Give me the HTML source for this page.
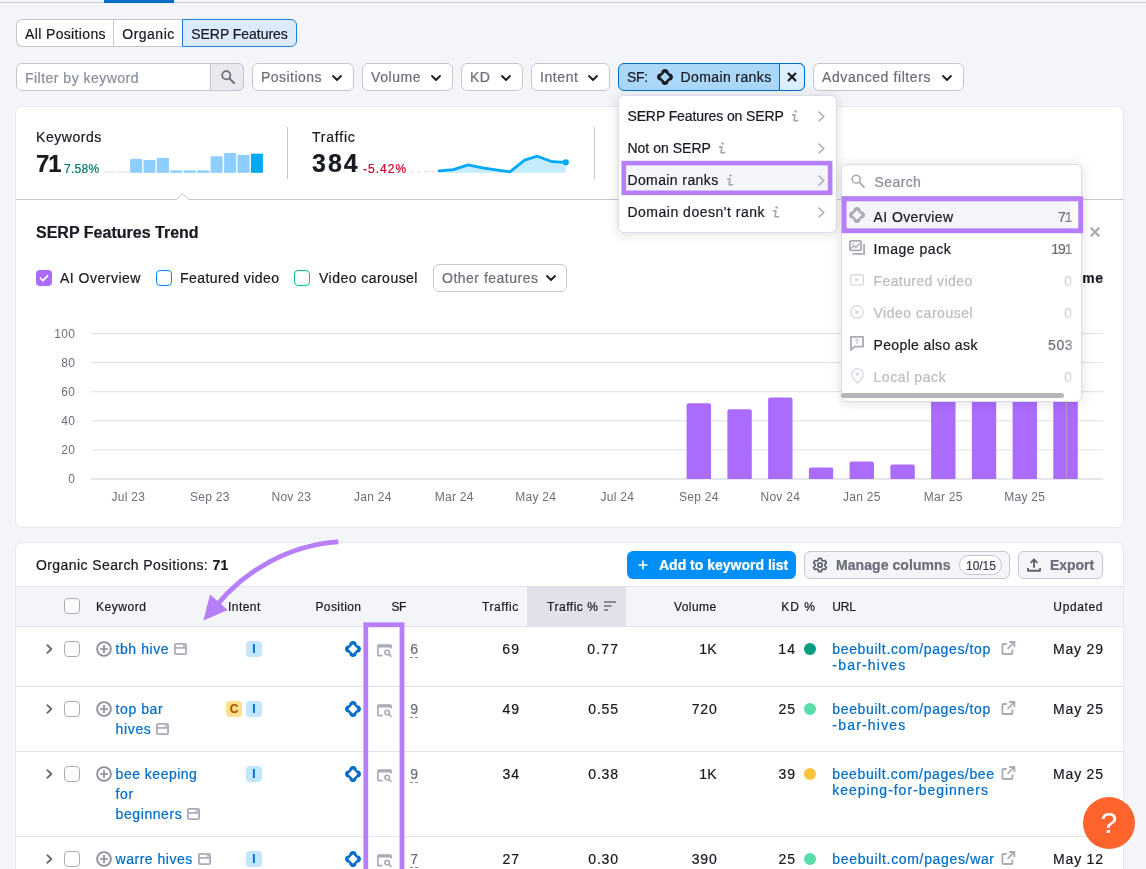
<!DOCTYPE html>
<html lang="en">
<head>
<meta charset="utf-8">
<title>Organic Research – SERP Features</title>
<style>
*{box-sizing:border-box;margin:0;padding:0}
html,body{width:1146px;height:869px;overflow:hidden}
body{background:#f4f5f9;font-family:"Liberation Sans",sans-serif;color:#191b23;font-size:14px;position:relative}
#root{-webkit-text-stroke:0.22px currentColor}
.abs{position:absolute}
.t{position:absolute;white-space:nowrap;line-height:1}
svg{display:block;position:absolute;overflow:visible}
/* top bar */
#topline{left:0;top:2px;width:1146px;height:1px;background:#c9ccd4}
#topblue{left:104px;top:0;width:70px;height:3px;background:#006dca}
/* tabs */
.tab{position:absolute;top:19px;height:28px;border:1px solid #c4c7cf;background:#fff;font-size:14px;line-height:28px;text-align:center;white-space:nowrap}
/* filters */
.fbtn{position:absolute;top:63px;height:28px;border:1px solid #c4c7cf;border-radius:6px;background:#fff;color:#6c6e79;font-size:14px;line-height:26px;white-space:nowrap}
.fbtn .lbl{position:absolute;left:8px;top:0}
.card{position:absolute;background:#fff;border-radius:6px;box-shadow:0 0 0 1px #e9eaf0}
.g{color:#6c6e79}

.bdg{width:16px;height:16px;border-radius:4px;font-size:12px;font-weight:bold;line-height:16px;text-align:center}
.th{font-size:12px;color:#191b23}
.kw{font-size:14px;color:#006dca;line-height:16px}
.url{font-size:14px;color:#006dca;line-height:16px}
.num{font-size:14px;line-height:16px}
.sfn{font-size:14px;line-height:16px;color:#6c6e79;border-bottom:1px dashed #8a8e9b;padding-bottom:0}

.menu{background:#fff;border-radius:6px;border:1px solid #dcdde6;box-shadow:0 1px 12px rgba(25,27,35,0.15)}
.mi{font-size:14px;line-height:16px}
</style>
<style id="ls">
.num{letter-spacing:0.8px;margin-right:-0.8px}
#vo2{letter-spacing:0.4px;margin-right:-0.4px}
.xl{letter-spacing:0.25px}
#sc2,#sc3,#sc5{letter-spacing:0.6px}
#tab1{letter-spacing:0.35px}
#tab2{letter-spacing:0.49px}
#tab3{letter-spacing:-0.04px}
#fkw{letter-spacing:0.48px}
#f1{letter-spacing:0.46px}
#f2{letter-spacing:0.56px}
#f3{letter-spacing:0.30px}
#f4{letter-spacing:0.59px}
#f5a{letter-spacing:-0.30px}
#f5b{letter-spacing:0.39px}
#f6{letter-spacing:0.59px}
#kwl{letter-spacing:0.55px}
#kwn{letter-spacing:-1.00px}
#kwp{letter-spacing:0.28px}
#trl{letter-spacing:0.78px}
#trn{letter-spacing:2.00px}
#trp{letter-spacing:1.01px}
#sft{letter-spacing:0.01px}
#cb1{letter-spacing:0.50px}
#cb2{letter-spacing:0.43px}
#cb3{letter-spacing:0.47px}
#oth{letter-spacing:0.50px}
#osp{letter-spacing:0.41px}
#b1{letter-spacing:-0.00px}
#b2{letter-spacing:0.07px}
#b2c{letter-spacing:-0.04px}
#b3{letter-spacing:-0.05px}
#h1{letter-spacing:0.56px}
#h2{letter-spacing:0.45px}
#h3{letter-spacing:0.42px}
#h4{letter-spacing:-0.50px}
#h5{letter-spacing:0.63px}
#h6{letter-spacing:0.53px}
#h7{letter-spacing:0.45px}
#h8{letter-spacing:1.00px}
#h9{letter-spacing:-0.20px}
#h10{letter-spacing:0.61px}
#kw0_0{letter-spacing:0.55px}
#kw1_0{letter-spacing:0.57px}
#kw1_1{letter-spacing:0.63px}
#kw2_0{letter-spacing:0.50px}
#kw2_1{letter-spacing:0.60px}
#kw2_2{letter-spacing:0.58px}
#kw3_0{letter-spacing:0.50px}
#u0_0{letter-spacing:0.63px}
#u0_1{letter-spacing:1.20px}
#u1_0{letter-spacing:0.63px}
#u1_1{letter-spacing:1.20px}
#u2_0{letter-spacing:0.62px}
#u2_1{letter-spacing:0.97px}
#u3_0{letter-spacing:0.66px}
#m0{letter-spacing:-0.10px}
#m1{letter-spacing:0.02px}
#m2{letter-spacing:0.40px}
#m3{letter-spacing:0.51px}
#srch{letter-spacing:0.41px}
#s0{letter-spacing:0.42px}
#s1{letter-spacing:0.54px}
#s2{letter-spacing:0.41px}
#s3{letter-spacing:0.52px}
#s4{letter-spacing:0.36px}
#s5{letter-spacing:0.58px}
#tr0{letter-spacing:1.20px;margin-right:-1.20px}
#pc0{letter-spacing:1.15px;margin-right:-1.15px}
#vo0{letter-spacing:0.40px;margin-right:-0.40px}
#kd0{letter-spacing:1.20px;margin-right:-1.20px}
#dt0{letter-spacing:0.84px;margin-right:-0.84px}
#sc0{letter-spacing:-1.00px;margin-right:1.00px}
#sc1{letter-spacing:-1.00px;margin-right:1.00px}
#sc4{letter-spacing:0.60px;margin-right:-0.60px}
</style>
</head>
<body>
<div id="root" style="position:absolute;left:0;top:0;width:1146px;height:869px;will-change:transform">
<div class="abs" id="topline"></div>
<div class="abs" id="topblue"></div>

<!-- tabs -->
<div class="tab" style="left:16px;width:98px;border-radius:6px 0 0 6px;border-right:none"><span id="tab1">All Positions</span></div>
<div class="tab" style="left:113px;width:70px;border-right:none"><span id="tab2">Organic</span></div>
<div class="tab" style="left:182px;width:115px;border-radius:0 6px 6px 0;border-color:#1a7fd4;background:#dbebfb"><span id="tab3">SERP Features</span></div>

<!-- filter row -->
<div class="fbtn" style="left:16px;width:228px;color:#8a8e9b"><span class="lbl" id="fkw" style="top:1px">Filter by keyword</span>
  <div class="abs" style="left:193px;top:-1px;width:34px;height:28px;background:#e9eaf0;border:1px solid #c4c7cf;border-radius:0 6px 6px 0"></div>
  <svg style="left:203px;top:5px" width="16" height="16" viewBox="0 0 16 16"><circle cx="6.3" cy="6.3" r="4.1" fill="none" stroke="#6c6e79" stroke-width="1.8"/><path d="M9.4 9.4 L14 14" stroke="#6c6e79" stroke-width="2" stroke-linecap="round"/></svg>
</div>
<div class="fbtn" style="left:252px;width:102px"><span class="lbl" id="f1">Positions</span><svg style="left:79px;top:11px" width="10" height="6" viewBox="0 0 10 6"><path d="M1 1 L5 5 L9 1" fill="none" stroke="#191b23" stroke-width="1.8" stroke-linecap="round" stroke-linejoin="round"/></svg></div>
<div class="fbtn" style="left:362px;width:91px"><span class="lbl" id="f2">Volume</span><svg style="left:68px;top:11px" width="10" height="6" viewBox="0 0 10 6"><path d="M1 1 L5 5 L9 1" fill="none" stroke="#191b23" stroke-width="1.8" stroke-linecap="round" stroke-linejoin="round"/></svg></div>
<div class="fbtn" style="left:461px;width:62px"><span class="lbl" id="f3">KD</span><svg style="left:39px;top:11px" width="10" height="6" viewBox="0 0 10 6"><path d="M1 1 L5 5 L9 1" fill="none" stroke="#191b23" stroke-width="1.8" stroke-linecap="round" stroke-linejoin="round"/></svg></div>
<div class="fbtn" style="left:531px;width:79px"><span class="lbl" id="f4">Intent</span><svg style="left:56px;top:11px" width="10" height="6" viewBox="0 0 10 6"><path d="M1 1 L5 5 L9 1" fill="none" stroke="#191b23" stroke-width="1.8" stroke-linecap="round" stroke-linejoin="round"/></svg></div>
<div class="fbtn" style="left:618px;width:187px;background:#abd7f8;border-color:#006dca;color:#191b23"><span class="lbl" id="f5a">SF:</span><span class="lbl" id="f5b" style="left:61.5px">Domain ranks</span>
  <svg style="left:38px;top:4.9px" width="16" height="16" viewBox="0 0 16 16"><path d="M11.78 4.22 A3.8 3.8 0 1 1 11.78 11.78 A3.8 3.8 0 1 1 4.22 11.78 A3.8 3.8 0 1 1 4.22 4.22 A3.8 3.8 0 1 1 11.78 4.22 Z M8 3.3 L3.3 8 L8 12.7 L12.7 8 Z" fill="#191b23" fill-rule="evenodd"/></svg>
  <div class="abs" style="left:160px;top:-1px;width:26px;height:28px;background:#dcefff;border:1px solid #006dca;border-radius:0 6px 6px 0"></div>
  <svg style="left:168px;top:8px" width="10" height="10" viewBox="0 0 10 10"><path d="M1 1 L9 9 M9 1 L1 9" stroke="#191b23" stroke-width="2.2" stroke-linecap="butt"/></svg>
</div>
<div class="fbtn" style="left:813px;width:151px"><span class="lbl" id="f6">Advanced filters</span><svg style="left:128px;top:11px" width="10" height="6" viewBox="0 0 10 6"><path d="M1 1 L5 5 L9 1" fill="none" stroke="#191b23" stroke-width="1.8" stroke-linecap="round" stroke-linejoin="round"/></svg></div>

<!-- SUMMARY CARD -->
<div class="card" id="card1" style="left:16px;top:107px;width:1107px;height:420px"></div>

<div class="t" id="kwl" style="left:36px;top:130px;font-size:14px">Keywords</div>
<div class="t" id="kwn" style="left:36px;top:152px;font-size:24px;font-weight:bold">71</div>
<div class="t" id="kwp" style="left:64px;top:163px;font-size:12px;color:#007c65">7.58%</div>
<div class="t" id="trl" style="left:312px;top:130px;font-size:14px">Traffic</div>
<div class="t" id="trn" style="left:312px;top:151px;font-size:25px;font-weight:bold">384</div>
<div class="t" id="trp" style="left:363px;top:163px;font-size:12px;color:#d1002f">-5.42%</div>
<svg style="left:0;top:0" width="1146" height="869" viewBox="0 0 1146 869" font-family="Liberation Sans, sans-serif">
  <rect x="103.2" y="171.6" width="12" height="1.2" fill="#e0e1e9"/><rect x="116.6" y="171.6" width="12" height="1.2" fill="#e0e1e9"/><rect x="130.1" y="158.9" width="12" height="13.9" fill="#8ecdff"/><rect x="143.5" y="160.0" width="12" height="12.8" fill="#8ecdff"/><rect x="156.9" y="157.9" width="12" height="14.9" fill="#8ecdff"/><rect x="170.4" y="170.4" width="12" height="2.4" fill="#8ecdff"/><rect x="183.8" y="170.4" width="12" height="2.4" fill="#8ecdff"/><rect x="197.2" y="170.4" width="12" height="2.4" fill="#8ecdff"/><rect x="210.6" y="156.3" width="12" height="16.5" fill="#8ecdff"/><rect x="224.1" y="152.9" width="12" height="19.9" fill="#8ecdff"/><rect x="237.5" y="155.0" width="12" height="17.8" fill="#8ecdff"/><rect x="250.9" y="153.7" width="12" height="19.1" fill="#00a9f7"/>
  <path d="M410 171.6 H439" stroke="#e0e1e9" stroke-width="1.2" stroke-dasharray="4 3"/>
  <polygon points="439,172.8 439.0,170.9 453.4,169.6 468.1,164.8 482.4,167.8 509.9,171.8 524.6,160.2 537.4,156.2 552.1,161.7 565.8,162.3 565.8,172.8" fill="#c4ecfd"/>
  <polyline points="439.0,170.9 453.4,169.6 468.1,164.8 482.4,167.8 509.9,171.8 524.6,160.2 537.4,156.2 552.1,161.7 565.8,162.3" fill="none" stroke="#00a9f7" stroke-width="2.8" stroke-linejoin="round" stroke-linecap="round"/>
  <circle cx="565.8" cy="162.3" r="3.1" fill="#00a9f7"/>
  <rect x="287" y="127" width="1" height="52" fill="#c4c7cf"/>
  <rect x="594" y="127" width="1" height="52" fill="#c4c7cf"/>
  <path d="M16 199.5 H176.5 L182.5 193.5 L188.5 199.5 H1123" fill="none" stroke="#c4c7cf" stroke-width="1"/>
  <rect x="91" y="333.0" width="1012" height="1" fill="#e0e1e9"/><text x="75.4" y="337.5" text-anchor="end" font-size="12" fill="#6c6e79" letter-spacing="0.4">100</text><rect x="91" y="362.1" width="1012" height="1" fill="#e0e1e9"/><text x="75.4" y="366.6" text-anchor="end" font-size="12" fill="#6c6e79" letter-spacing="0.4">80</text><rect x="91" y="391.2" width="1012" height="1" fill="#e0e1e9"/><text x="75.4" y="395.7" text-anchor="end" font-size="12" fill="#6c6e79" letter-spacing="0.4">60</text><rect x="91" y="420.3" width="1012" height="1" fill="#e0e1e9"/><text x="75.4" y="424.8" text-anchor="end" font-size="12" fill="#6c6e79" letter-spacing="0.4">40</text><rect x="91" y="449.4" width="1012" height="1" fill="#e0e1e9"/><text x="75.4" y="453.9" text-anchor="end" font-size="12" fill="#6c6e79" letter-spacing="0.4">20</text><rect x="91" y="478.5" width="1012" height="1" fill="#cdd0d9"/><text x="75.4" y="483.0" text-anchor="end" font-size="12" fill="#6c6e79" letter-spacing="0.4">0</text>
  <g transform="translate(0,0.5)"><path d="M686.6 478.5 V404.8 Q686.6 402.8 688.6 402.8 H709.0 Q711.0 402.8 711.0 404.8 V478.5 Z" fill="#ab6cfe"/><path d="M727.4 478.5 V410.7 Q727.4 408.7 729.4 408.7 H749.8 Q751.8 408.7 751.8 410.7 V478.5 Z" fill="#ab6cfe"/><path d="M768.1 478.5 V399.0 Q768.1 397.0 770.1 397.0 H790.5 Q792.5 397.0 792.5 399.0 V478.5 Z" fill="#ab6cfe"/><path d="M808.9 478.5 V468.9 Q808.9 466.9 810.9 466.9 H831.2 Q833.2 466.9 833.2 468.9 V478.5 Z" fill="#ab6cfe"/><path d="M849.6 478.5 V463.0 Q849.6 461.0 851.6 461.0 H872.0 Q874.0 461.0 874.0 463.0 V478.5 Z" fill="#ab6cfe"/><path d="M890.4 478.5 V465.9 Q890.4 463.9 892.4 463.9 H912.8 Q914.8 463.9 914.8 465.9 V478.5 Z" fill="#ab6cfe"/><path d="M931.1 478.5 V378.6 Q931.1 376.6 933.1 376.6 H953.5 Q955.5 376.6 955.5 378.6 V478.5 Z" fill="#ab6cfe"/><path d="M971.9 478.5 V375.7 Q971.9 373.7 973.9 373.7 H994.2 Q996.2 373.7 996.2 375.7 V478.5 Z" fill="#ab6cfe"/><path d="M1012.6 478.5 V371.4 Q1012.6 369.4 1014.6 369.4 H1035.0 Q1037.0 369.4 1037.0 371.4 V478.5 Z" fill="#ab6cfe"/><path d="M1053.3 478.5 V377.2 Q1053.3 375.2 1055.3 375.2 H1075.8 Q1077.8 375.2 1077.8 377.2 V478.5 Z" fill="#ab6cfe"/>
  </g><rect x="1066" y="333.5" width="1" height="145.5" fill="#a9abb6" opacity="0.8"/>
  <text x="128.3" y="501" text-anchor="middle" font-size="12" fill="#6c6e79" class="xl">Jul 23</text><text x="209.8" y="501" text-anchor="middle" font-size="12" fill="#6c6e79" class="xl">Sep 23</text><text x="291.3" y="501" text-anchor="middle" font-size="12" fill="#6c6e79" class="xl">Nov 23</text><text x="372.8" y="501" text-anchor="middle" font-size="12" fill="#6c6e79" class="xl">Jan 24</text><text x="454.3" y="501" text-anchor="middle" font-size="12" fill="#6c6e79" class="xl">Mar 24</text><text x="535.8" y="501" text-anchor="middle" font-size="12" fill="#6c6e79" class="xl">May 24</text><text x="617.3" y="501" text-anchor="middle" font-size="12" fill="#6c6e79" class="xl">Jul 24</text><text x="698.8" y="501" text-anchor="middle" font-size="12" fill="#6c6e79" class="xl">Sep 24</text><text x="780.3" y="501" text-anchor="middle" font-size="12" fill="#6c6e79" class="xl">Nov 24</text><text x="861.8" y="501" text-anchor="middle" font-size="12" fill="#6c6e79" class="xl">Jan 25</text><text x="943.3" y="501" text-anchor="middle" font-size="12" fill="#6c6e79" class="xl">Mar 25</text><text x="1024.8" y="501" text-anchor="middle" font-size="12" fill="#6c6e79" class="xl">May 25</text>
  <path d="M1090.8 227.8 L1099.2 236.2 M1099.2 227.8 L1090.8 236.2" stroke="#a3a6b1" stroke-width="2.1"/>
</svg>
<div class="t" id="sft" style="left:36px;top:225px;font-size:16px;font-weight:bold">SERP Features Trend</div>
<div class="abs" style="left:36px;top:270px;width:16px;height:16px;border-radius:4px;background:#ab6cfe"></div>
<svg style="left:36px;top:270px" width="16" height="16" viewBox="0 0 16 16"><path d="M4.5 8.2 L7 10.6 L11.5 5.8" fill="none" stroke="#fff" stroke-width="1.8" stroke-linecap="round" stroke-linejoin="round"/></svg>
<div class="t" id="cb1" style="left:60px;top:271px;font-size:14px">AI Overview</div>
<div class="abs" style="left:156px;top:270px;width:16px;height:16px;border-radius:4px;border:1px solid #008ff8;background:#fff"></div>
<div class="t" id="cb2" style="left:180px;top:271px;font-size:14px">Featured video</div>
<div class="abs" style="left:294px;top:270px;width:16px;height:16px;border-radius:4px;border:1px solid #00c192;background:#fff"></div>
<div class="t" id="cb3" style="left:319px;top:271px;font-size:14px">Video carousel</div>
<div class="abs" style="left:433px;top:264px;width:134px;height:28px;border:1px solid #c4c7cf;border-radius:6px;background:#fff"></div>
<div class="t g" id="oth" style="left:442px;top:271px;font-size:14px">Other features</div>
<svg style="left:546px;top:275px" width="10" height="6" viewBox="0 0 10 6"><path d="M1 1 L5 5 L9 1" fill="none" stroke="#191b23" stroke-width="1.8" stroke-linecap="round" stroke-linejoin="round"/></svg>
<div class="t" id="allt" style="right:43px;top:271px;font-size:14px;font-weight:bold;letter-spacing:0.5px;margin-right:-0.5px">All time</div>

<!--CARD1-END-->

<div class="card" id="card2" style="left:16px;top:543px;width:1107px;height:340px"></div>
<div class="t" id="osp" style="left:36px;top:558px;font-size:14px">Organic Search Positions: <b>71</b></div>
<div class="abs" style="left:627px;top:551px;width:169px;height:28px;border-radius:6px;background:#008ff8"></div>
<svg style="left:638px;top:560px" width="10" height="10" viewBox="0 0 10 10"><path d="M5 0.5 V9.5 M0.5 5 H9.5" stroke="#fff" stroke-width="1.6"/></svg>
<div class="t" id="b1" style="left:659px;top:558px;font-size:14px;font-weight:bold;color:#fff">Add to keyword list</div>
<div class="abs" style="left:804px;top:551px;width:206px;height:28px;border-radius:6px;background:#f4f5f9;border:1px solid #c4c7cf"></div>
<svg style="left:812px;top:557px" width="16" height="16" viewBox="0 0 16 16"><g fill="none" stroke="#62646e" stroke-width="1.8"><circle cx="8" cy="8" r="2.2"/><path d="M6.7 1.3 H9.3 L9.8 3.2 L11.2 4 L13.1 3.5 L14.4 5.7 L13 7.1 V8.9 L14.4 10.3 L13.1 12.5 L11.2 12 L9.8 12.8 L9.3 14.7 H6.7 L6.2 12.8 L4.8 12 L2.9 12.5 L1.6 10.3 L3 8.9 V7.1 L1.6 5.7 L2.9 3.5 L4.8 4 L6.2 3.2 Z" stroke-linejoin="round"/></g></svg>
<div class="t" id="b2" style="left:836px;top:558px;font-size:14px;font-weight:bold;color:#6c6e79">Manage columns</div>
<div class="abs" style="left:959px;top:555px;width:43px;height:20px;border-radius:10px;background:#fff;border:1px solid #c4c7cf"></div>
<div class="t" id="b2c" style="left:966px;top:560px;font-size:12px;color:#3e404a">10/15</div>
<div class="abs" style="left:1018px;top:551px;width:85px;height:28px;border-radius:6px;background:#f4f5f9;border:1px solid #c4c7cf"></div>
<svg style="left:1027px;top:558px" width="14" height="14" viewBox="0 0 14 14"><path d="M7 9.8 V1.6 M3.6 4.8 L7 1.4 L10.4 4.8 M1 10 V12.8 H13 V10" fill="none" stroke="#62646e" stroke-width="1.9" stroke-linejoin="round"/></svg>
<div class="t" id="b3" style="left:1050px;top:558px;font-size:14px;font-weight:bold;color:#6c6e79">Export</div>
<div class="abs" style="left:16px;top:586px;width:1107px;height:41px;background:#f4f5f9;border-top:1px solid #e0e1e9;border-bottom:1px solid #e0e1e9"></div>
<div class="abs" style="left:527px;top:587px;width:99px;height:39px;background:#e0e1e9"></div>
<div class="abs" style="left:64px;top:598.3px;width:16px;height:16px;border:1px solid #a9abb6;border-radius:4px;background:#fff"></div>
<div class="t th" id="h1" style="left:96px;top:600.5px">Keyword</div>
<div class="t th" id="h2" style="left:228px;top:600.5px">Intent</div>
<div class="t th" id="h3" style="left:315.4px;top:600.5px">Position</div>
<div class="t th" id="h4" style="left:391.4px;top:600.5px">SF</div>
<div class="t th" id="h5" style="right:627px;top:600.5px">Traffic</div>
<div class="t th" id="h6" style="left:547px;top:600.5px">Traffic %</div>
<svg style="left:604px;top:601px" width="12" height="10" viewBox="0 0 12 10"><path d="M0 1 H12 M0 5 H7.5 M0 9 H4" stroke="#6c6e79" stroke-width="1.6"/></svg>
<div class="t th" id="h7" style="right:429.4px;top:600.5px">Volume</div>
<div class="t th" id="h8" style="right:330.20000000000005px;top:600.5px">KD %</div>
<div class="t th" id="h9" style="left:832.3px;top:600.5px">URL</div>
<div class="t th" id="h10" style="right:43px;top:600.5px">Updated</div>
<svg style="left:45.6px;top:644.0px" width="7" height="10" viewBox="0 0 7 10"><path d="M1.3 1.2 L5.3 5 L1.3 8.8" fill="none" stroke="#62646e" stroke-width="1.75" stroke-linecap="round" stroke-linejoin="round"/></svg>
<div class="abs" style="left:64px;top:641.0px;width:16px;height:16px;border:1px solid #a9abb6;border-radius:4px;background:#fff"></div>
<svg style="left:96px;top:641.0px" width="16" height="16" viewBox="0 0 16 16"><circle cx="8" cy="8" r="6.9" fill="none" stroke="#8a8e9b" stroke-width="1.8"/><path d="M8 4.6 V11.4 M4.6 8 H11.4" stroke="#8a8e9b" stroke-width="1.7" stroke-linecap="round"/></svg>
<div class="t kw" id="kw0_0" style="left:115.6px;top:641.0px">tbh hive</div>
<svg style="left:173.8px;top:643.2px" width="13" height="12" viewBox="0 0 13 12"><rect x="0.9" y="0.9" width="11.2" height="10.2" rx="1.2" fill="none" stroke="#a9abb6" stroke-width="1.8"/><path d="M1 4.9 H12" stroke="#a9abb6" stroke-width="1.7"/><path d="M8.6 2.9 H11" stroke="#a9abb6" stroke-width="1.4"/></svg>
<div class="abs bdg" style="left:246px;top:641.0px;background:#c4e5fe;color:#006dca">I</div>
<svg style="left:344.8px;top:641.0px" width="16" height="16" viewBox="0 0 16 16"><path d="M11.78 4.22 A3.8 3.8 0 1 1 11.78 11.78 A3.8 3.8 0 1 1 4.22 11.78 A3.8 3.8 0 1 1 4.22 4.22 A3.8 3.8 0 1 1 11.78 4.22 Z M8 3.3 L3.3 8 L8 12.7 L12.7 8 Z" fill="#006dca" fill-rule="evenodd"/></svg>
<svg style="left:377px;top:643.5px" width="15" height="13" viewBox="0 0 15 13"><path d="M5.5 11.7 H1.9 Q0.9 11.7 0.9 10.7 V2 Q0.9 1 1.9 1 H13.1 Q14.1 1 14.1 2 V4.5" fill="none" stroke="#a9abb6" stroke-width="1.7"/><path d="M1 2.2 H14" stroke="#a9abb6" stroke-width="2.6"/><circle cx="10.2" cy="8.5" r="2.3" fill="none" stroke="#a9abb6" stroke-width="1.6"/><path d="M12 10.4 L14 12.4" stroke="#a9abb6" stroke-width="1.6" stroke-linecap="round"/></svg>
<div class="t sfn" id="sf0" style="left:410.3px;top:641.0px">6</div>
<div class="t num" id="tr0" style="right:627px;top:641.0px">69</div>
<div class="t num" id="pc0" style="right:528px;top:641.0px">0.77</div>
<div class="t num" id="vo0" style="right:429.3px;top:641.0px">1K</div>
<div class="t num" id="kd0" style="right:351px;top:641.0px">14</div>
<div class="abs" style="left:804px;top:642.8px;width:12.4px;height:12.4px;border-radius:50%;background:#009f81"></div>
<div class="t url" id="u0_0" style="left:832.3px;top:640.5px">beebuilt.com/pages/top</div>
<div class="t url" id="u0_1" style="left:832.3px;top:657.0px">-bar-hives</div>
<svg style="left:1001px;top:640.7px" width="14" height="14" viewBox="0 0 14 14"><path d="M5.8 3 H2.4 Q1.4 3 1.4 4 V12 Q1.4 13 2.4 13 H10.4 Q11.4 13 11.4 12 V8.6" fill="none" stroke="#a9abb6" stroke-width="1.8"/><path d="M8.2 1 H13.4 V6.2 M13.2 1.2 L6.6 7.8" fill="none" stroke="#a9abb6" stroke-width="1.8"/></svg>
<div class="t num" id="dt0" style="right:43px;top:641.0px">May 29</div>
<div class="abs" style="left:16px;top:686.0px;width:1107px;height:1px;background:#e0e1e9"></div>
<svg style="left:45.6px;top:704.0px" width="7" height="10" viewBox="0 0 7 10"><path d="M1.3 1.2 L5.3 5 L1.3 8.8" fill="none" stroke="#62646e" stroke-width="1.75" stroke-linecap="round" stroke-linejoin="round"/></svg>
<div class="abs" style="left:64px;top:701.0px;width:16px;height:16px;border:1px solid #a9abb6;border-radius:4px;background:#fff"></div>
<svg style="left:96px;top:701.0px" width="16" height="16" viewBox="0 0 16 16"><circle cx="8" cy="8" r="6.9" fill="none" stroke="#8a8e9b" stroke-width="1.8"/><path d="M8 4.6 V11.4 M4.6 8 H11.4" stroke="#8a8e9b" stroke-width="1.7" stroke-linecap="round"/></svg>
<div class="t kw" id="kw1_0" style="left:115.6px;top:701.0px">top bar</div>
<div class="t kw" id="kw1_1" style="left:115.6px;top:721.0px">hives</div>
<svg style="left:156.1px;top:723.2px" width="13" height="12" viewBox="0 0 13 12"><rect x="0.9" y="0.9" width="11.2" height="10.2" rx="1.2" fill="none" stroke="#a9abb6" stroke-width="1.8"/><path d="M1 4.9 H12" stroke="#a9abb6" stroke-width="1.7"/><path d="M8.6 2.9 H11" stroke="#a9abb6" stroke-width="1.4"/></svg>
<div class="abs bdg" style="left:226px;top:701.0px;background:#ffdf8b;color:#a75800">C</div>
<div class="abs bdg" style="left:246px;top:701.0px;background:#c4e5fe;color:#006dca">I</div>
<svg style="left:344.8px;top:701.0px" width="16" height="16" viewBox="0 0 16 16"><path d="M11.78 4.22 A3.8 3.8 0 1 1 11.78 11.78 A3.8 3.8 0 1 1 4.22 11.78 A3.8 3.8 0 1 1 4.22 4.22 A3.8 3.8 0 1 1 11.78 4.22 Z M8 3.3 L3.3 8 L8 12.7 L12.7 8 Z" fill="#006dca" fill-rule="evenodd"/></svg>
<svg style="left:377px;top:703.5px" width="15" height="13" viewBox="0 0 15 13"><path d="M5.5 11.7 H1.9 Q0.9 11.7 0.9 10.7 V2 Q0.9 1 1.9 1 H13.1 Q14.1 1 14.1 2 V4.5" fill="none" stroke="#a9abb6" stroke-width="1.7"/><path d="M1 2.2 H14" stroke="#a9abb6" stroke-width="2.6"/><circle cx="10.2" cy="8.5" r="2.3" fill="none" stroke="#a9abb6" stroke-width="1.6"/><path d="M12 10.4 L14 12.4" stroke="#a9abb6" stroke-width="1.6" stroke-linecap="round"/></svg>
<div class="t sfn" id="sf1" style="left:410.3px;top:701.0px">9</div>
<div class="t num" id="tr1" style="right:627px;top:701.0px">49</div>
<div class="t num" id="pc1" style="right:528px;top:701.0px">0.55</div>
<div class="t num" id="vo1" style="right:429.3px;top:701.0px">720</div>
<div class="t num" id="kd1" style="right:351px;top:701.0px">25</div>
<div class="abs" style="left:804px;top:702.8px;width:12.4px;height:12.4px;border-radius:50%;background:#59ddaa"></div>
<div class="t url" id="u1_0" style="left:832.3px;top:700.5px">beebuilt.com/pages/top</div>
<div class="t url" id="u1_1" style="left:832.3px;top:717.0px">-bar-hives</div>
<svg style="left:1001px;top:700.7px" width="14" height="14" viewBox="0 0 14 14"><path d="M5.8 3 H2.4 Q1.4 3 1.4 4 V12 Q1.4 13 2.4 13 H10.4 Q11.4 13 11.4 12 V8.6" fill="none" stroke="#a9abb6" stroke-width="1.8"/><path d="M8.2 1 H13.4 V6.2 M13.2 1.2 L6.6 7.8" fill="none" stroke="#a9abb6" stroke-width="1.8"/></svg>
<div class="t num" id="dt1" style="right:43px;top:701.0px">May 25</div>
<div class="abs" style="left:16px;top:751.0px;width:1107px;height:1px;background:#e0e1e9"></div>
<svg style="left:45.6px;top:769.0px" width="7" height="10" viewBox="0 0 7 10"><path d="M1.3 1.2 L5.3 5 L1.3 8.8" fill="none" stroke="#62646e" stroke-width="1.75" stroke-linecap="round" stroke-linejoin="round"/></svg>
<div class="abs" style="left:64px;top:766.0px;width:16px;height:16px;border:1px solid #a9abb6;border-radius:4px;background:#fff"></div>
<svg style="left:96px;top:766.0px" width="16" height="16" viewBox="0 0 16 16"><circle cx="8" cy="8" r="6.9" fill="none" stroke="#8a8e9b" stroke-width="1.8"/><path d="M8 4.6 V11.4 M4.6 8 H11.4" stroke="#8a8e9b" stroke-width="1.7" stroke-linecap="round"/></svg>
<div class="t kw" id="kw2_0" style="left:115.6px;top:766.0px">bee keeping</div>
<div class="t kw" id="kw2_1" style="left:115.6px;top:786.0px">for</div>
<div class="t kw" id="kw2_2" style="left:115.6px;top:806.0px">beginners</div>
<svg style="left:187.0px;top:808.2px" width="13" height="12" viewBox="0 0 13 12"><rect x="0.9" y="0.9" width="11.2" height="10.2" rx="1.2" fill="none" stroke="#a9abb6" stroke-width="1.8"/><path d="M1 4.9 H12" stroke="#a9abb6" stroke-width="1.7"/><path d="M8.6 2.9 H11" stroke="#a9abb6" stroke-width="1.4"/></svg>
<div class="abs bdg" style="left:246px;top:766.0px;background:#c4e5fe;color:#006dca">I</div>
<svg style="left:344.8px;top:766.0px" width="16" height="16" viewBox="0 0 16 16"><path d="M11.78 4.22 A3.8 3.8 0 1 1 11.78 11.78 A3.8 3.8 0 1 1 4.22 11.78 A3.8 3.8 0 1 1 4.22 4.22 A3.8 3.8 0 1 1 11.78 4.22 Z M8 3.3 L3.3 8 L8 12.7 L12.7 8 Z" fill="#006dca" fill-rule="evenodd"/></svg>
<svg style="left:377px;top:768.5px" width="15" height="13" viewBox="0 0 15 13"><path d="M5.5 11.7 H1.9 Q0.9 11.7 0.9 10.7 V2 Q0.9 1 1.9 1 H13.1 Q14.1 1 14.1 2 V4.5" fill="none" stroke="#a9abb6" stroke-width="1.7"/><path d="M1 2.2 H14" stroke="#a9abb6" stroke-width="2.6"/><circle cx="10.2" cy="8.5" r="2.3" fill="none" stroke="#a9abb6" stroke-width="1.6"/><path d="M12 10.4 L14 12.4" stroke="#a9abb6" stroke-width="1.6" stroke-linecap="round"/></svg>
<div class="t sfn" id="sf2" style="left:410.3px;top:766.0px">9</div>
<div class="t num" id="tr2" style="right:627px;top:766.0px">34</div>
<div class="t num" id="pc2" style="right:528px;top:766.0px">0.38</div>
<div class="t num" id="vo2" style="right:429.3px;top:766.0px">1K</div>
<div class="t num" id="kd2" style="right:351px;top:766.0px">39</div>
<div class="abs" style="left:804px;top:767.8px;width:12.4px;height:12.4px;border-radius:50%;background:#fdc23c"></div>
<div class="t url" id="u2_0" style="left:832.3px;top:765.5px">beebuilt.com/pages/bee</div>
<div class="t url" id="u2_1" style="left:832.3px;top:782.0px">keeping-for-beginners</div>
<svg style="left:1001px;top:765.7px" width="14" height="14" viewBox="0 0 14 14"><path d="M5.8 3 H2.4 Q1.4 3 1.4 4 V12 Q1.4 13 2.4 13 H10.4 Q11.4 13 11.4 12 V8.6" fill="none" stroke="#a9abb6" stroke-width="1.8"/><path d="M8.2 1 H13.4 V6.2 M13.2 1.2 L6.6 7.8" fill="none" stroke="#a9abb6" stroke-width="1.8"/></svg>
<div class="t num" id="dt2" style="right:43px;top:766.0px">May 25</div>
<div class="abs" style="left:16px;top:836.0px;width:1107px;height:1px;background:#e0e1e9"></div>
<svg style="left:45.6px;top:854.0px" width="7" height="10" viewBox="0 0 7 10"><path d="M1.3 1.2 L5.3 5 L1.3 8.8" fill="none" stroke="#62646e" stroke-width="1.75" stroke-linecap="round" stroke-linejoin="round"/></svg>
<div class="abs" style="left:64px;top:851.0px;width:16px;height:16px;border:1px solid #a9abb6;border-radius:4px;background:#fff"></div>
<svg style="left:96px;top:851.0px" width="16" height="16" viewBox="0 0 16 16"><circle cx="8" cy="8" r="6.9" fill="none" stroke="#8a8e9b" stroke-width="1.8"/><path d="M8 4.6 V11.4 M4.6 8 H11.4" stroke="#8a8e9b" stroke-width="1.7" stroke-linecap="round"/></svg>
<div class="t kw" id="kw3_0" style="left:115.6px;top:851.0px">warre hives</div>
<svg style="left:197.5px;top:853.2px" width="13" height="12" viewBox="0 0 13 12"><rect x="0.9" y="0.9" width="11.2" height="10.2" rx="1.2" fill="none" stroke="#a9abb6" stroke-width="1.8"/><path d="M1 4.9 H12" stroke="#a9abb6" stroke-width="1.7"/><path d="M8.6 2.9 H11" stroke="#a9abb6" stroke-width="1.4"/></svg>
<div class="abs bdg" style="left:246px;top:851.0px;background:#c4e5fe;color:#006dca">I</div>
<svg style="left:344.8px;top:851.0px" width="16" height="16" viewBox="0 0 16 16"><path d="M11.78 4.22 A3.8 3.8 0 1 1 11.78 11.78 A3.8 3.8 0 1 1 4.22 11.78 A3.8 3.8 0 1 1 4.22 4.22 A3.8 3.8 0 1 1 11.78 4.22 Z M8 3.3 L3.3 8 L8 12.7 L12.7 8 Z" fill="#006dca" fill-rule="evenodd"/></svg>
<svg style="left:377px;top:853.5px" width="15" height="13" viewBox="0 0 15 13"><path d="M5.5 11.7 H1.9 Q0.9 11.7 0.9 10.7 V2 Q0.9 1 1.9 1 H13.1 Q14.1 1 14.1 2 V4.5" fill="none" stroke="#a9abb6" stroke-width="1.7"/><path d="M1 2.2 H14" stroke="#a9abb6" stroke-width="2.6"/><circle cx="10.2" cy="8.5" r="2.3" fill="none" stroke="#a9abb6" stroke-width="1.6"/><path d="M12 10.4 L14 12.4" stroke="#a9abb6" stroke-width="1.6" stroke-linecap="round"/></svg>
<div class="t sfn" id="sf3" style="left:410.3px;top:851.0px">7</div>
<div class="t num" id="tr3" style="right:627px;top:851.0px">27</div>
<div class="t num" id="pc3" style="right:528px;top:851.0px">0.30</div>
<div class="t num" id="vo3" style="right:429.3px;top:851.0px">390</div>
<div class="t num" id="kd3" style="right:351px;top:851.0px">25</div>
<div class="abs" style="left:804px;top:852.8px;width:12.4px;height:12.4px;border-radius:50%;background:#59ddaa"></div>
<div class="t url" id="u3_0" style="left:832.3px;top:850.5px">beebuilt.com/pages/war</div>
<div class="t url" id="u3_1" style="left:832.3px;top:867.0px">re-hives</div>
<svg style="left:1001px;top:850.7px" width="14" height="14" viewBox="0 0 14 14"><path d="M5.8 3 H2.4 Q1.4 3 1.4 4 V12 Q1.4 13 2.4 13 H10.4 Q11.4 13 11.4 12 V8.6" fill="none" stroke="#a9abb6" stroke-width="1.8"/><path d="M8.2 1 H13.4 V6.2 M13.2 1.2 L6.6 7.8" fill="none" stroke="#a9abb6" stroke-width="1.8"/></svg>
<div class="t num" id="dt3" style="right:43px;top:851.0px">May 12</div>
<!--TABLE-END-->

<div class="abs menu" style="left:618px;top:95px;width:218.5px;height:137.5px"></div>
<div class="abs" style="left:621px;top:164px;width:212px;height:32px;background:#f4f5f9"></div>
<div class="t mi" id="m0" style="left:627.4px;top:108px">SERP Features on SERP</div>
<svg style="left:792.0px;top:110px" width="6" height="12" viewBox="0 0 6 12"><circle cx="3.5" cy="1.4" r="1.2" fill="#a3a6b1"/><path d="M0.6 4.9 H2.9 L2.1 10.8 H5.6" fill="none" stroke="#a3a6b1" stroke-width="1.6" stroke-linejoin="round" stroke-linecap="round"/></svg>
<svg style="left:817.5px;top:110.5px" width="7" height="11" viewBox="0 0 7 11"><path d="M1 1 L5.8 5.5 L1 10" fill="none" stroke="#a9abb6" stroke-width="1.5" stroke-linecap="round" stroke-linejoin="round"/></svg>
<div class="t mi" id="m1" style="left:627.4px;top:140px">Not on SERP</div>
<svg style="left:719.1px;top:142px" width="6" height="12" viewBox="0 0 6 12"><circle cx="3.5" cy="1.4" r="1.2" fill="#a3a6b1"/><path d="M0.6 4.9 H2.9 L2.1 10.8 H5.6" fill="none" stroke="#a3a6b1" stroke-width="1.6" stroke-linejoin="round" stroke-linecap="round"/></svg>
<svg style="left:817.5px;top:142.5px" width="7" height="11" viewBox="0 0 7 11"><path d="M1 1 L5.8 5.5 L1 10" fill="none" stroke="#a9abb6" stroke-width="1.5" stroke-linecap="round" stroke-linejoin="round"/></svg>
<div class="t mi" id="m2" style="left:627.4px;top:172px">Domain ranks</div>
<svg style="left:726.6px;top:174px" width="6" height="12" viewBox="0 0 6 12"><circle cx="3.5" cy="1.4" r="1.2" fill="#a3a6b1"/><path d="M0.6 4.9 H2.9 L2.1 10.8 H5.6" fill="none" stroke="#a3a6b1" stroke-width="1.6" stroke-linejoin="round" stroke-linecap="round"/></svg>
<svg style="left:817.5px;top:174.5px" width="7" height="11" viewBox="0 0 7 11"><path d="M1 1 L5.8 5.5 L1 10" fill="none" stroke="#a9abb6" stroke-width="1.5" stroke-linecap="round" stroke-linejoin="round"/></svg>
<div class="t mi" id="m3" style="left:627.4px;top:204px">Domain doesn't rank</div>
<svg style="left:772.9px;top:206px" width="6" height="12" viewBox="0 0 6 12"><circle cx="3.5" cy="1.4" r="1.2" fill="#a3a6b1"/><path d="M0.6 4.9 H2.9 L2.1 10.8 H5.6" fill="none" stroke="#a3a6b1" stroke-width="1.6" stroke-linejoin="round" stroke-linecap="round"/></svg>
<svg style="left:817.5px;top:206.5px" width="7" height="11" viewBox="0 0 7 11"><path d="M1 1 L5.8 5.5 L1 10" fill="none" stroke="#a9abb6" stroke-width="1.5" stroke-linecap="round" stroke-linejoin="round"/></svg>
<div class="abs menu" style="left:840.5px;top:163.5px;width:241px;height:238px"></div>
<div class="abs" style="left:841px;top:196px;width:240px;height:1px;background:#c4c7cf"></div>
<svg style="left:851px;top:174px" width="14" height="14" viewBox="0 0 14 14"><circle cx="5.2" cy="5.2" r="4" fill="none" stroke="#a9abb6" stroke-width="1.6"/><path d="M8.2 8.2 L13 13" stroke="#a9abb6" stroke-width="1.8" stroke-linecap="round"/></svg>
<div class="t" id="srch" style="left:874.5px;top:175px;font-size:14px;color:#8a8e9b">Search</div>
<div class="abs" style="left:842px;top:200px;width:239px;height:30px;background:#f4f5f9"></div>
<div class="t mi" id="s0" style="left:873.5px;top:209px;color:#191b23">AI Overview</div>
<div class="t mi" id="sc0" style="right:73.4px;top:209px;color:#6c6e79">71</div>
<svg style="left:849.2px;top:207px" width="16" height="16" viewBox="0 0 16 16"><path d="M11.78 4.22 A3.8 3.8 0 1 1 11.78 11.78 A3.8 3.8 0 1 1 4.22 11.78 A3.8 3.8 0 1 1 4.22 4.22 A3.8 3.8 0 1 1 11.78 4.22 Z M8 3.3 L3.3 8 L8 12.7 L12.7 8 Z" fill="#a9abb6" fill-rule="evenodd"/></svg>
<div class="t mi" id="s1" style="left:873.5px;top:241px;color:#191b23">Image pack</div>
<div class="t mi" id="sc1" style="right:73.4px;top:241px;color:#6c6e79">191</div>
<svg style="left:849px;top:240px" width="16" height="15" viewBox="0 0 16 15"><rect x="0.9" y="0.9" width="11.2" height="9.4" rx="1" fill="none" stroke="#a9abb6" stroke-width="1.8"/><path d="M2 8.5 L4.8 5.8 L6.8 7.6 L10.8 3.4" fill="none" stroke="#a9abb6" stroke-width="1.4"/><circle cx="4" cy="3.6" r="0.9" fill="#a9abb6"/><path d="M15.1 4 V13.9 H3.5" fill="none" stroke="#a9abb6" stroke-width="1.8"/></svg>
<div class="t mi" id="s2" style="left:873.5px;top:273px;color:#bbbcc0">Featured video</div>
<div class="t mi" id="sc2" style="right:73.4px;top:273px;color:#d0d1d5">0</div>
<svg style="left:850px;top:273.5px" width="14" height="12" viewBox="0 0 14 12"><rect x="0.7" y="0.7" width="12.6" height="10.2" rx="1" fill="none" stroke="#d9dbe2" stroke-width="1.4"/><path d="M5.2 3.4 L9.2 5.8 L5.2 8.2 Z" fill="#d9dbe2"/></svg>
<div class="t mi" id="s3" style="left:873.5px;top:305px;color:#bbbcc0">Video carousel</div>
<div class="t mi" id="sc3" style="right:73.4px;top:305px;color:#d0d1d5">0</div>
<svg style="left:850px;top:304.5px" width="14" height="14" viewBox="0 0 14 14"><circle cx="7" cy="7" r="6.2" fill="none" stroke="#d9dbe2" stroke-width="1.4"/><path d="M5.4 4.2 L10 7 L5.4 9.8 Z" fill="#d9dbe2"/></svg>
<div class="t mi" id="s4" style="left:873.5px;top:337px;color:#191b23">People also ask</div>
<div class="t mi" id="sc4" style="right:73.4px;top:337px;color:#6c6e79">503</div>
<svg style="left:850px;top:336px" width="14" height="15" viewBox="0 0 14 15"><path d="M0.9 0.9 H13.1 V10.6 H4.6 L0.9 13.8 Z" fill="none" stroke="#a9abb6" stroke-width="1.8" stroke-linejoin="round"/><text x="7" y="8.4" font-size="7" font-weight="bold" text-anchor="middle" fill="#a9abb6" font-family="Liberation Sans, sans-serif">?</text></svg>
<div class="t mi" id="s5" style="left:873.5px;top:369px;color:#bbbcc0">Local pack</div>
<div class="t mi" id="sc5" style="right:73.4px;top:369px;color:#d0d1d5">0</div>
<svg style="left:850.5px;top:368px" width="13" height="16" viewBox="0 0 13 16"><path d="M6.5 0.8 C3.2 0.8 0.8 3.2 0.8 6.3 C0.8 10 6.5 15 6.5 15 C6.5 15 12.2 10 12.2 6.3 C12.2 3.2 9.8 0.8 6.5 0.8 Z" fill="none" stroke="#d9dbe2" stroke-width="1.4"/><circle cx="6.5" cy="6.3" r="1.8" fill="#d9dbe2"/></svg>
<div class="abs" style="left:1066px;top:200px;width:14px;height:192px;background:linear-gradient(90deg,rgba(255,255,255,0),rgba(255,255,255,0.95))"></div>
<div class="abs" style="left:841px;top:392.5px;width:223px;height:5.5px;border-radius:3px;background:#b3b5b8"></div>
<!--MENUS-END-->

<svg style="left:0;top:0" width="1146" height="869" viewBox="0 0 1146 869"><rect x="623.80" y="163.10" width="206.30" height="29.70" fill="none" stroke="#b77ef9" stroke-width="4.6"/><rect x="844.05" y="198.85" width="236.60" height="31.90" fill="none" stroke="#b77ef9" stroke-width="4.9"/><rect x="365.80" y="624.80" width="36.20" height="262.80" fill="none" stroke="#b77ef9" stroke-width="4.8"/><path d="M338.3 541.9 C 290 545 245 570 216 606" fill="none" stroke="#b77ef9" stroke-width="4.8"/><polygon points="210,594.5 227.8,610.1 203.4,620.5" fill="#b77ef9"/></svg>
<div class="abs" style="left:1083px;top:797px;width:52px;height:52px;border-radius:50%;background:#ff642d"></div>
<div class="t" id="help" style="left:1100.5px;top:808px;font-size:30px;color:#fff">?</div>
<!--OVERLAYS-END-->
</div>
</body>
</html>
